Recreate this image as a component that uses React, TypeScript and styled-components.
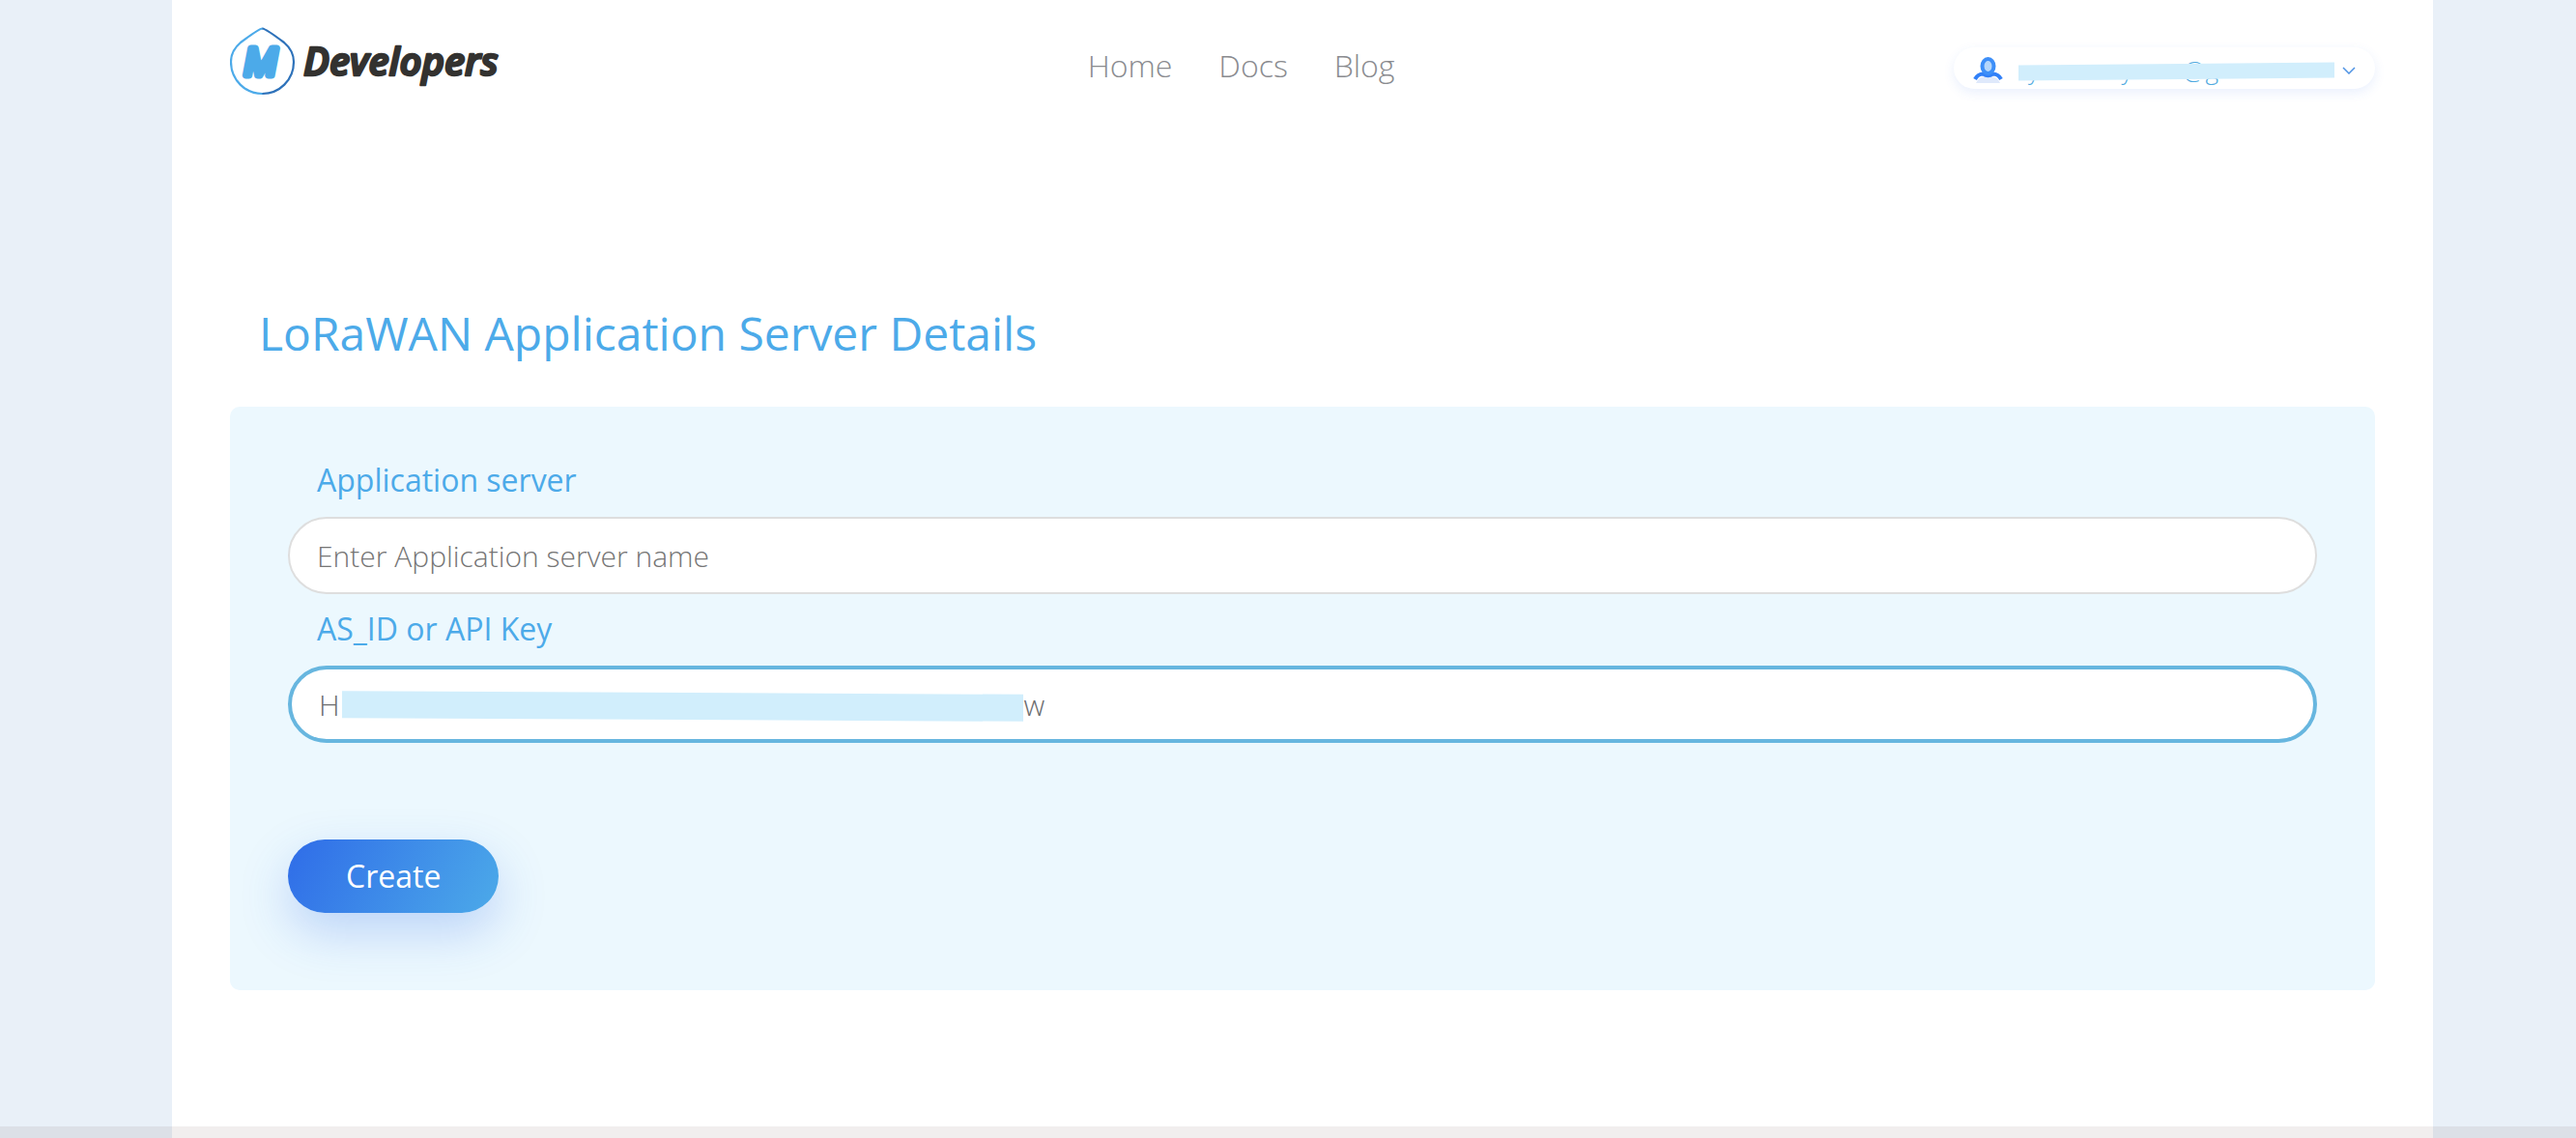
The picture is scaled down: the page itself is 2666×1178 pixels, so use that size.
import React from "react";
import styled, { createGlobalStyle } from "styled-components";

const GlobalStyle = createGlobalStyle`
  *, *::before, *::after { box-sizing: border-box; }
  body {
    margin: 0;
    background: #e9f0f8;
    font-family: "Open Sans", "Noto Sans", sans-serif;
    font-size: 32px;
    line-height: 44px;
  }
`;

const Frame = styled.div`
  min-height: 100vh;
  padding: 0 148px 0 178px;
  display: flex;
`;

const Page = styled.div`
  flex: 1;
  min-width: 0;
  padding: 0 60px 60px;
  background: #fff;
`;

const Header = styled.header`
  display: grid;
  grid-template-columns: 7fr auto 8fr;
  align-items: start;
  height: 140px;
`;

const Brand = styled.a`
  justify-self: start;
  display: flex;
  margin-top: 28px;
`;

const Nav = styled.nav`
  margin-top: 46px;
  display: flex;
  gap: 48px;
`;

const NavLink = styled.a`
  color: #8a8b8f;
  font-weight: 300;
  text-decoration: none;
`;

const Account = styled.button`
  justify-self: end;
  margin-top: 49px;
  display: flex;
  align-items: center;
  height: 43px;
  padding: 4px 20px 0;
  border: 0;
  border-radius: 22px;
  background: #fff;
  box-shadow: 0 4px 12px rgba(47, 108, 232, 0.1);
`;

const AccountName = styled.span`
  position: relative;
  width: 327px;
  height: 39px;
  margin: 0 8px 0 16px;
  padding-left: 10px;
  color: #4ea9e0;
  font: 300 26px/39px "Open Sans", sans-serif;
  text-align: left;
  white-space: nowrap;
`;

const Redaction = styled.span<{ $top: number; $left: number; $width: number; $height: number; $tilt: number }>`
  position: absolute;
  top: ${(p) => p.$top}px;
  left: ${(p) => p.$left}px;
  width: ${(p) => p.$width}px;
  height: ${(p) => p.$height}px;
  background: #d1eefc;
  transform: skewY(${(p) => p.$tilt}deg);
`;

const Title = styled.h1`
  margin: 172px 30px 43px;
  color: #4caae9;
  font-size: 48px;
  font-weight: 400;
  line-height: 66px;
`;

const Card = styled.form`
  padding: 54px 60px 80px;
  border-radius: 10px;
  background: #ecf8fe;
`;

const Field = styled.div`
  position: relative;
  margin-bottom: 14px;
`;

const Label = styled.label`
  display: block;
  margin: 0 30px 16px;
  color: #4caae9;
`;

const TextBox = styled.input`
  display: block;
  width: 100%;
  height: 80px;
  padding: 0 28px;
  border: 2px solid #dedede;
  border-radius: 40px;
  outline: 0;
  background: #fff;
  color: #6c6d6f;
  font: 300 30px/44px "Open Sans", sans-serif;

  &::placeholder {
    color: #757575;
    opacity: 1;
  }
`;

const ActiveTextBox = styled(TextBox)`
  border: 4px solid #67b6df;
`;

const Submit = styled.button`
  display: block;
  height: 76px;
  margin-top: 100px;
  padding: 0 60px;
  border: 0;
  border-radius: 38px;
  background: linear-gradient(118deg, #2f6ce8 0%, #4caae9 100%);
  box-shadow: 0 20px 50px rgba(47, 108, 232, 0.25);
  color: #fff;
  font: 400 32px/44px "Open Sans", sans-serif;
`;

const ScrollTrack = styled.div`
  position: fixed;
  right: 0;
  bottom: 0;
  left: 0;
  height: 12px;
  background: rgba(60, 20, 20, 0.07);
`;

const Logo = () => (
  <svg width="290" height="72" viewBox="0 0 290 72" role="img" aria-label="M Developers">
    <defs>
      <linearGradient id="rim" x1="0" y1="0" x2="1" y2="0">
        <stop offset="0.49" stopColor="#4caae9" />
        <stop offset="0.51" stopColor="#2e72ba" />
      </linearGradient>
    </defs>
    <path
      d="M33.500 1.500C37 2 48 10 56 16C63 22 66 29 66 36C66 55 51 69 33.500 69C16 69 1 55 1 36C1 29 4 22 11 16C19 10 30 2 33.500 1.500Z"
      fill="none"
      stroke="url(#rim)"
      strokeWidth="2.200"
    />
    <text
      x="15"
      y="50"
      fill="#4caae9"
      stroke="#4caae9"
      strokeWidth="7"
      strokeLinejoin="round"
      fontFamily="Liberation Sans, sans-serif"
      fontSize="40"
      fontStyle="italic"
    >
      M
    </text>
    <text
      x="76"
      y="50"
      fill="#333230"
      stroke="#333230"
      strokeWidth="2.500"
      strokeLinejoin="round"
      fontFamily="Open Sans, sans-serif"
      fontSize="40"
      fontWeight="600"
      fontStyle="italic"
    >
      Developers
    </text>
  </svg>
);

const UserIcon = () => (
  <svg width="31" height="27" viewBox="0 0 31 27" aria-hidden="true">
    <path d="M3 27Q6 19 15.500 20Q25 19 28 27Z" fill="#dfe9fb" />
    <path d="M2 23Q5 17.500 10.500 17.500Q15.500 21 20.500 17.500Q26 17.500 29 23" fill="none" stroke="#3180f8" strokeWidth="4" />
    <ellipse cx="15.500" cy="9.500" rx="6" ry="7.500" fill="#b5d7fb" stroke="#3d8ff8" strokeWidth="4" />
  </svg>
);

const Chevron = () => (
  <svg width="14" height="8" viewBox="0 0 14 8" fill="none" aria-hidden="true">
    <path d="M1 1L7 7L13 1" stroke="#4f93e4" strokeWidth="1.500" />
  </svg>
);

export default function App() {
  return (
    <>
      <GlobalStyle />
      <Frame>
        <Page>
          <Header>
            <Brand href="#">
              <Logo />
            </Brand>
            <Nav>
              <NavLink href="#">Home</NavLink>
              <NavLink href="#">Docs</NavLink>
              <NavLink href="#">Blog</NavLink>
            </Nav>
            <Account type="button" aria-label="Account">
              <UserIcon />
              <AccountName>
                {"y\u2003\u2003\u2003\u2005y\u2003\u2003@g"}
                <Redaction $top={13} $left={0} $width={327} $height={16} $tilt={-0.5} />
              </AccountName>
              <Chevron />
            </Account>
          </Header>
          <main>
            <Title>LoRaWAN Application Server Details</Title>
            <Card onSubmit={(e) => e.preventDefault()}>
              <Field>
                <Label htmlFor="server">Application server</Label>
                <TextBox id="server" type="text" placeholder="Enter Application server name" />
              </Field>
              <Field>
                <Label htmlFor="key">AS_ID or API Key</Label>
                <ActiveTextBox id="key" type="text" defaultValue={"H" + "\u2003".repeat(23) + "\u2002\u200Aw"} />
                <Redaction $top={88} $left={56} $width={705} $height={28} $tilt={0.3} />
              </Field>
              <Submit type="submit">Create</Submit>
            </Card>
          </main>
        </Page>
      </Frame>
      <ScrollTrack />
    </>
  );
}
